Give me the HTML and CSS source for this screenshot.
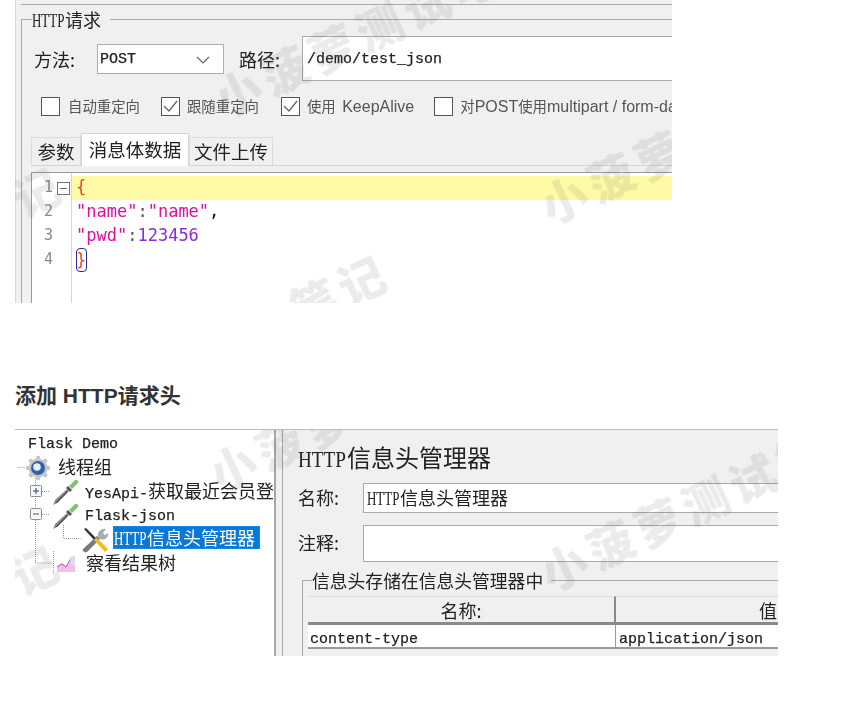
FILE: index.html
```html
<!DOCTYPE html>
<html lang="zh">
<head>
<meta charset="utf-8">
<title>添加 HTTP请求头</title>
<link rel="stylesheet" href="styles.css">
</head>
<body>
<div class="shot shot-req">
  <div class="top-strip"></div>
  <fieldset class="group">
    <legend class="legend"><span class="lat">HTTP</span>请求</legend>
    <div class="req-row">
      <span class="label">方法:</span>
      <div class="select"><span class="mono">POST</span>
        <svg class="chev" width="14" height="8" viewBox="0 0 14 8"><path d="M1 1l6 6 6-6" fill="none" stroke="#666" stroke-width="1.2"/></svg>
      </div>
      <span class="label path-label">路径:</span>
      <div class="path-input"><span class="mono">/demo/test_json</span></div>
    </div>
    <div class="checks">
      <div class="check chk-a"><span class="box"></span><span class="cn">自动重定向</span></div>
      <div class="check chk-b"><span class="box"><svg width="17" height="17" viewBox="0 0 17 17"><path d="M2 8l5 5 8-10" fill="none" stroke="#666" stroke-width="1.3"/></svg></span><span class="cn">跟随重定向</span></div>
      <div class="check chk-c"><span class="box"><svg width="17" height="17" viewBox="0 0 17 17"><path d="M2 8l5 5 8-10" fill="none" stroke="#666" stroke-width="1.3"/></svg></span><span><span class="cn keep-gap">使用</span> KeepAlive</span></div>
      <div class="check"><span class="box"></span><span class="nowrap"><span class="cn">对</span>POST<span class="cn">使用</span>multipart / form-data</span></div>
    </div>
    <div class="tabs">
      <div class="tab tab-params">参数</div>
      <div class="tab tab-active">消息体数据</div>
      <div class="tab tab-files">文件上传</div>
    </div>
    <div class="editor">
      <div class="gutter">
        <div class="num">1<span class="fold"></span></div>
        <div class="num">2</div>
        <div class="num">3</div>
        <div class="num">4</div>
      </div>
      <div class="code">
        <div class="line line-hl"><span class="brace">{</span></div>
        <div class="line"><span class="str">"name"</span><span class="punct">:</span><span class="str">"name"</span><span class="comma">,</span></div>
        <div class="line"><span class="str">"pwd"</span><span class="punct">:</span><span class="numv">123456</span></div>
        <div class="line"><span class="brace match">}</span></div>
      </div>
    </div>
  </fieldset>
  <span class="mark m1">小菠萝测试笔记</span>
  <span class="mark m2">小菠萝</span>
  <span class="mark m3">笔记</span>
  <span class="mark m4">记</span>
</div>

<h3 class="heading">添加 HTTP请求头</h3>

<div class="shot shot-hdr">
  <div class="tree">
    <div class="row row-root"><span class="mono">Flask Demo</span></div>
    <div class="row row-l1">
      <svg class="ico gear" width="26" height="26" viewBox="0 0 26 26"><g fill="#c4c6c9"><circle cx="13" cy="13" r="9.5"/><rect x="11" y="1" width="4" height="24" rx="1"/><rect x="1" y="11" width="24" height="4" rx="1"/><rect x="11" y="1" width="4" height="24" rx="1" transform="rotate(45 13 13)"/><rect x="11" y="1" width="4" height="24" rx="1" transform="rotate(-45 13 13)"/></g><circle cx="13" cy="13" r="7" fill="#2f62a6"/><circle cx="12" cy="12" r="3.800" fill="#e6eef6"/></svg>
      <span>线程组</span>
    </div>
    <div class="row row-l2">
      <svg class="ico drop" width="28" height="28" viewBox="0 0 28 28"><path d="M1 27l2-5L15 11l2 2L5 25z" fill="#8d9094"/><path d="M3 25L15 13l1 1L5 25z" fill="#4a4c4f"/><path d="M14 10l4 4 2-2-4-4z" fill="#555"/><path d="M17 8l6-6c2-1 4 1 3 3l-6 6z" fill="#7cc66d"/></svg>
      <span class="clip"><span class="mono">YesApi-</span>获取最近会员登</span>
    </div>
    <div class="row row-l2">
      <svg class="ico drop" width="28" height="28" viewBox="0 0 28 28"><path d="M1 27l2-5L15 11l2 2L5 25z" fill="#8d9094"/><path d="M3 25L15 13l1 1L5 25z" fill="#4a4c4f"/><path d="M14 10l4 4 2-2-4-4z" fill="#555"/><path d="M17 8l6-6c2-1 4 1 3 3l-6 6z" fill="#7cc66d"/></svg>
      <span class="mono">Flask-json</span>
    </div>
    <div class="row row-l3">
      <svg class="ico tool" width="27" height="26" viewBox="0 0 27 26"><path d="M2 2l2-1 10 10-2 2z" fill="#333"/><path d="M1 22L15 9l3 3L5 25c-2 1-5-1-4-3z" fill="#777a7d"/><path d="M16 10c-1-5 3-9 8-8l-3 4 2 2 3-2c1 4-3 8-8 6z" fill="#a9adb1"/><path d="M12 13l3-2 11 11-3 3z" fill="#eebd1e"/></svg>
      <span class="selected"><span class="lat">HTTP</span>信息头管理器</span>
    </div>
    <div class="row row-l1b">
      <svg class="ico graph" width="20" height="18" viewBox="0 0 20 18"><path d="M1 17V11l5-3 4 3 5-8 4-1v15z" fill="#f2bfe6"/><path d="M1 12l5-3 4 3 5-9" fill="none" stroke="#b060b0"/><path d="M14 3a4 4 0 0 1 5-2v9h-3z" fill="#cfe3f5"/></svg>
      <span>察看结果树</span>
    </div>
    <svg class="tree-lines" width="100" height="160" viewBox="0 0 100 160"><g fill="none" stroke="#999" stroke-dasharray="1 1"><path d="M2.500 37.500h7"/><path d="M20.500 48v85h17"/><path d="M38.500 121v21"/><path d="M27 61.500h8M27 84.500h8"/><path d="M48.500 95v13.500h17"/></g><g fill="#f4f6f8" stroke="#8a8f94"><rect x="15.500" y="55.500" width="11" height="11" rx="1"/><rect x="15.500" y="78.500" width="11" height="11" rx="1"/></g><path d="M18 61h6M21 58v6" stroke="#23418a"/><path d="M18 84h6" stroke="#555"/></svg>
  </div>
  <div class="split"></div>
  <div class="manager">
    <div class="title"><span class="lat-title">HTTP</span>信息头管理器</div>
    <div class="field field-name">
      <span class="label">名称:</span>
      <div class="input"><span class="lat">HTTP</span>信息头管理器</div>
    </div>
    <div class="field field-note">
      <span class="label">注释:</span>
      <div class="input input-tall"></div>
    </div>
    <fieldset class="store">
      <legend class="store-legend">信息头存储在信息头管理器中</legend>
      <div class="table">
        <div class="th th-name">名称:</div>
        <div class="th th-val">值</div>
        <div class="td td-name"><span class="mono">content-type</span></div>
        <div class="td td-val"><span class="mono">application/json</span></div>
      </div>
    </fieldset>
  </div>
  <span class="mark m5">小菠萝测试笔记</span>
  <span class="mark m6">小菠萝</span>
  <span class="mark m7">记</span>
</div>
</body>
</html>
```
FILE: styles.css
```css
* { box-sizing: border-box; }
html, body { margin: 0; padding: 0; background: #fff; }
body {
  width: 845px;
  height: 714px;
  overflow: hidden;
  font-family: "Noto Sans CJK SC", "Liberation Sans", sans-serif;
  color: #222;
}
.shot {
  position: relative;
  margin-left: 15px;
  overflow: hidden;
  background: #f0f0f0;
  filter: blur(0.35px);
}
.mono { font-family: "Liberation Mono", "Noto Sans CJK SC", monospace; font-size: 15px; -webkit-text-stroke: 0.25px #222; }
.lat {
  display: inline-block;
  width: 33px;
  font-family: "Liberation Serif", serif;
  font-size: 18px;
  line-height: 1;
  white-space: nowrap;
  transform: scaleX(0.72);
  transform-origin: left center;
}
.nowrap { white-space: nowrap; }
.cn { font-family: "Noto Sans CJK SC", sans-serif; font-size: 14.4px; }
.keep-gap { margin-right: 2px; }

/* first shot */
.shot-req { width: 657px; height: 303px; padding-left: 6px; box-shadow: inset 1px 0 0 #d8d8d8; }
.top-strip { height: 5px; border-bottom: 1px solid #a8a8a8; }
.group {
  width: 700px;
  margin: 2px 0 0;
  padding: 5px 0 0 9px;
  border: 1px solid #a9a9a9;
  border-right: 0;
  border-bottom: 0;
  min-width: 0;
}
.legend { padding: 0 9px 0 0; margin-left: 1px; font-size: 18px; line-height: 24px; height: 24px; color: #222; }
.req-row { display: flex; align-items: center; height: 45px; }
.label { font-size: 18px; line-height: 24px; color: #222; white-space: nowrap; }
.req-row > .label:first-child { margin-left: 3px; width: 63px; }
.select {
  display: flex;
  align-items: center;
  justify-content: space-between;
  width: 127px;
  height: 30px;
  padding: 2px 13px 0 2px;
  background: #fff;
  border: 1px solid #adadad;
}
.chev { display: block; }
.path-label { margin-left: 15px; width: 63px; }
.path-input {
  display: flex;
  align-items: center;
  width: 400px;
  height: 45px;
  padding: 2px 0 0 4px;
  background: #fff;
  border: 1px solid #a9a9a9;
}
.checks { display: flex; align-items: center; height: 20px; margin: 15px 0 0 10px; font-size: 16px; color: #555; }
.check { display: flex; align-items: center; gap: 7px; line-height: 20px; white-space: nowrap; font-family: "Liberation Sans", "Noto Sans CJK SC", sans-serif; }
.box { display: block; width: 19px; height: 19px; background: #fff; border: 1px solid #555; flex: none; }
.box svg { display: block; }
.chk-a { margin-right: 21px; gap: 8px; }
.chk-b { margin-right: 22px; }
.chk-c { margin-right: 20px; }
.tabs { display: flex; align-items: flex-end; height: 33px; margin-top: 17px; border-bottom: 1px solid #d4d4d4; width: 660px; }
.tab { font-size: 18.500px; line-height: 26px; height: 28px; text-align: center; background: #f0f0f0; border: 1px solid #dcdcdc; border-bottom: 0; white-space: nowrap; }
.tab-params { width: 50px; }
.tab-active { width: 108px; height: 33px; line-height: 31px; background: #fff; border-color: #d4d4d4; margin-bottom: -1px; }
.tab-files { width: 84px; }
.editor {
  display: flex;
  height: 140px;
  margin-top: 6px;
  background: #fff;
  border: 1px solid #9a9a9a;
  border-width: 1px 0 0 1px;
  padding-top: 3px;
}
.gutter { width: 40px; flex: none; border-right: 1px solid #d6d6d6; margin-top: -3px; padding-top: 3px; }
.num { position: relative; height: 24px; padding-left: 12px; font: 15px/23px "DejaVu Sans Mono", monospace; color: #888; }
.fold { position: absolute; left: 25px; top: 6px; width: 13px; height: 13px; border: 1px solid #777; background: linear-gradient(#666, #666) center / 7px 1px no-repeat #fff; }
.code { flex: 1; font: 17px/23px "DejaVu Sans Mono", monospace; }
.line { height: 24px; padding-left: 4px; white-space: pre; }
.line-hl { background: #fffaa6; }
.brace { color: #f4431e; }
.str { color: #e0109f; }
.punct { color: #555; }
.comma { color: #111; }
.numv { color: #8a2be2; }
.match { display: inline-block; width: 11px; height: 24px; line-height: 22px; border: 1px solid #2a2a9a; border-radius: 4px; text-indent: -1px; }

.mark {
  position: absolute;
  font: 900 46px/1 "Noto Sans CJK SC", sans-serif;
  letter-spacing: 6px;
  color: rgba(90, 90, 90, 0.12);
  white-space: nowrap;
  transform: rotate(-25deg);
  transform-origin: left center;
  pointer-events: none;
  filter: blur(0.6px);
}
.m1 { left: 201px; top: 77px; }
.m2 { left: 527px; top: 184px; }
.m3 { left: 277px; top: 287px; }
.m4 { left: -1px; top: 177px; }
.m5 { left: 527px; top: 121px; }
.m6 { left: 196px; top: 22px; }
.m7 { left: -3px; top: 125px; }

.heading {
  margin: 81px 0 21px 15px;
  font: 700 21px/24px "Liberation Sans", "Noto Sans CJK SC", sans-serif;
  color: #333;
}

/* second shot */
.shot-hdr { display: flex; width: 763px; height: 227px; border-top: 1px solid #bdbdbd; }
.tree { position: relative; width: 259px; flex: none; background: #fff; padding-top: 2px; font-size: 18px; overflow: hidden; }
.row { display: flex; align-items: center; height: 24px; white-space: nowrap; color: #222; }
.row-root { padding-left: 13px; }
.row-l1 { padding-left: 10px; gap: 7px; }
.row-l2 { padding-left: 37px; gap: 5px; }
.row-l3 { padding-left: 67px; gap: 4px; }
.row-l1b { padding-left: 41px; gap: 10px; }
.row-l1 > span, .row-l1b > span { margin-bottom: 4px; }
.row-l2 .clip { margin-bottom: 5px; }
.ico { display: block; flex: none; }
.selected { display: block; height: 23px; margin-bottom: 6px; padding: 0 5px 0 1px; line-height: 22px; color: #fff; background: #0a78d7; outline: 1px dotted #a87830; outline-offset: -1px; }
.tree-lines { position: absolute; left: 0; top: 0; }
.split { width: 9px; flex: none; background: #f0f0f0; border-left: 2px solid #a8a8a8; border-right: 1px solid #a8a8a8; }
.manager { flex: 1; min-width: 0; padding-left: 15px; overflow: hidden; }
.title { height: 53px; padding-top: 11px; font-size: 24px; line-height: 32px; white-space: nowrap; color: #222; }
.lat-title {
  display: inline-block;
  width: 49px;
  font-family: "Liberation Serif", serif;
  font-size: 24px;
  line-height: 1;
  white-space: nowrap;
  transform: scaleX(0.8);
  transform-origin: left center;
}
.field { display: flex; align-items: center; }
.field-name { height: 30px; }
.field-note { height: 37px; margin-top: 12px; }
.field .label { width: 65px; flex: none; padding-bottom: 3px; }
.input { flex: 1; height: 100%; min-width: 0; padding-left: 3px; margin-right: -2px; background: #fff; border: 1px solid #a9a9a9; font-size: 18px; line-height: 27px; white-space: nowrap; }
.input-tall { height: 37px; }
.store { width: 520px; margin: 7px 0 0 4px; padding: 5px 0 30px 5px; border: 1px solid #a9a9a9; border-right: 0; border-bottom: 0; min-width: 0; }
.store-legend { padding: 0 8px 0 0; margin-left: 4px; font-size: 17.800px; line-height: 22px; color: #222; white-space: nowrap; }
.table { display: grid; grid-template-columns: 308px 1fr; width: 470px; }
.th { height: 29px; line-height: 27px; font-size: 18px; text-align: center; background: #f0f0f0; border-top: 1px solid #dcdcdc; border-bottom: 3px solid #8a8a8a; border-right: 2px solid #8a8a8a; }
.th-val { border-right: 0; text-align: left; padding-left: 143px; }
.td { height: 24px; padding-left: 2px; line-height: 22px; background: #fff; border-bottom: 2px solid #9a9a9a; border-right: 1px solid #9a9a9a; white-space: nowrap; }
.td-val { border-right: 0; padding-left: 3px; }
```
